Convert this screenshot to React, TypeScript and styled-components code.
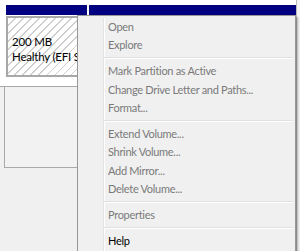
import styled, { createGlobalStyle } from 'styled-components';

const GlobalStyle = createGlobalStyle`
    html, body {
        margin: 0;
        padding: 0;
        background: #ffffff;
    }
    body {
        font-family: Lato, "Liberation Sans", sans-serif;
    }
`

const Screen = styled.div`
    position: relative;
    width: 300px;
    height: 251px;
    overflow: hidden;
    display: flex;
    background: #f0f0f0;
`

const Pane = styled.div`
    flex: 1;
    display: flex;
    flex-direction: column;
`

const RightEdge = styled.div`
    width: 3px;
    background: #f4f4f4;
    border-left: 1px solid #b9b9b9;
`

const DiskArea = styled.div`
    height: 87px;
    box-sizing: border-box;
    padding: 5px 0 0 6px;
    background: #ffffff;
    border-bottom: 1px solid #a9a9a9;
`

const BarRow = styled.div`
    display: flex;
    gap: 2px;
    height: 10px;
`

const Bar = styled.div<{ $width?: number }>`
    background: #000080;
    ${({ $width }) => ($width ? `width: ${$width}px;` : 'flex: 1;')}
`

const Partition = styled.div`
    margin-top: 1px;
    width: 81px;
    height: 61px;
    box-sizing: border-box;
    overflow: hidden;
    border: 2px solid #a8a8a8;
    border-right: none;
    padding: 16px 0 0 4px;
    background: repeating-linear-gradient(
        135deg,
        #ffffff 0px,
        #ffffff 4.5px,
        #cfcfcf 4.5px,
        #cfcfcf 5.7px
    );
    font-size: 11.5px;
    letter-spacing: -0.2px;
    line-height: 15px;
    color: #000000;
    white-space: nowrap;
`

const LowerRow = styled.div`
    height: 80px;
    margin-left: 4px;
    width: 74px;
    border-left: 1px solid #a9a9a9;
    border-bottom: 1px solid #a9a9a9;
    background: #f2f2f2;
`

const Menu = styled.div`
    position: absolute;
    left: 77px;
    top: 15px;
    width: 219px;
    height: 245px;
    box-sizing: border-box;
    padding: 1.8px 2px 2px 2px;
    background: #f0f0f0;
    border: 1px solid #979797;
    box-shadow: 2px 2px 2px rgba(0, 0, 0, 0.28);
    font-size: 11px;
    letter-spacing: -0.3px;

    &::before {
        content: '';
        position: absolute;
        top: 2px;
        bottom: 2px;
        left: 25px;
        width: 1px;
        background: #e2e3e3;
        border-right: 1px solid #ffffff;
    }
`

const Item = styled.div<{ $enabled?: boolean }>`
    position: relative;
    height: 18.4px;
    line-height: 18.4px;
    padding-left: 28px;
    color: ${({ $enabled }) => ($enabled ? '#000000' : '#7a7a7a')};
    white-space: nowrap;
`

const Separator = styled.div`
    position: relative;
    height: 7.6px;
    margin-left: 24px;
    display: flex;
    align-items: center;

    &::after {
        content: '';
        flex: 1;
        height: 1px;
        background: #e0e0e0;
        border-bottom: 1px solid #ffffff;
    }
`

type Entry = { label?: string; enabled?: boolean; sep?: boolean };

const entries: Entry[] = [
    { label: 'Open' },
    { label: 'Explore' },
    { sep: true },
    { label: 'Mark Partition as Active' },
    { label: 'Change Drive Letter and Paths...' },
    { label: 'Format...' },
    { sep: true },
    { label: 'Extend Volume...' },
    { label: 'Shrink Volume...' },
    { label: 'Add Mirror...' },
    { label: 'Delete Volume...' },
    { sep: true },
    { label: 'Properties' },
    { sep: true },
    { label: 'Help', enabled: true },
];

export default function App() {
    return (
        <>
            <GlobalStyle />
            <Screen>
                <Pane>
                    <DiskArea>
                        <BarRow>
                            <Bar $width={81} />
                            <Bar />
                        </BarRow>
                        <Partition>
                            200 MB
                            <br />
                            Healthy (EFI System Partition)
                        </Partition>
                    </DiskArea>
                    <LowerRow />
                </Pane>
                <RightEdge />
                <Menu>
                    {entries.map((e, i) =>
                        e.sep ? (
                            <Separator key={i} />
                        ) : (
                            <Item key={i} $enabled={e.enabled}>
                                {e.label}
                            </Item>
                        )
                    )}
                </Menu>
            </Screen>
        </>
    )
}
